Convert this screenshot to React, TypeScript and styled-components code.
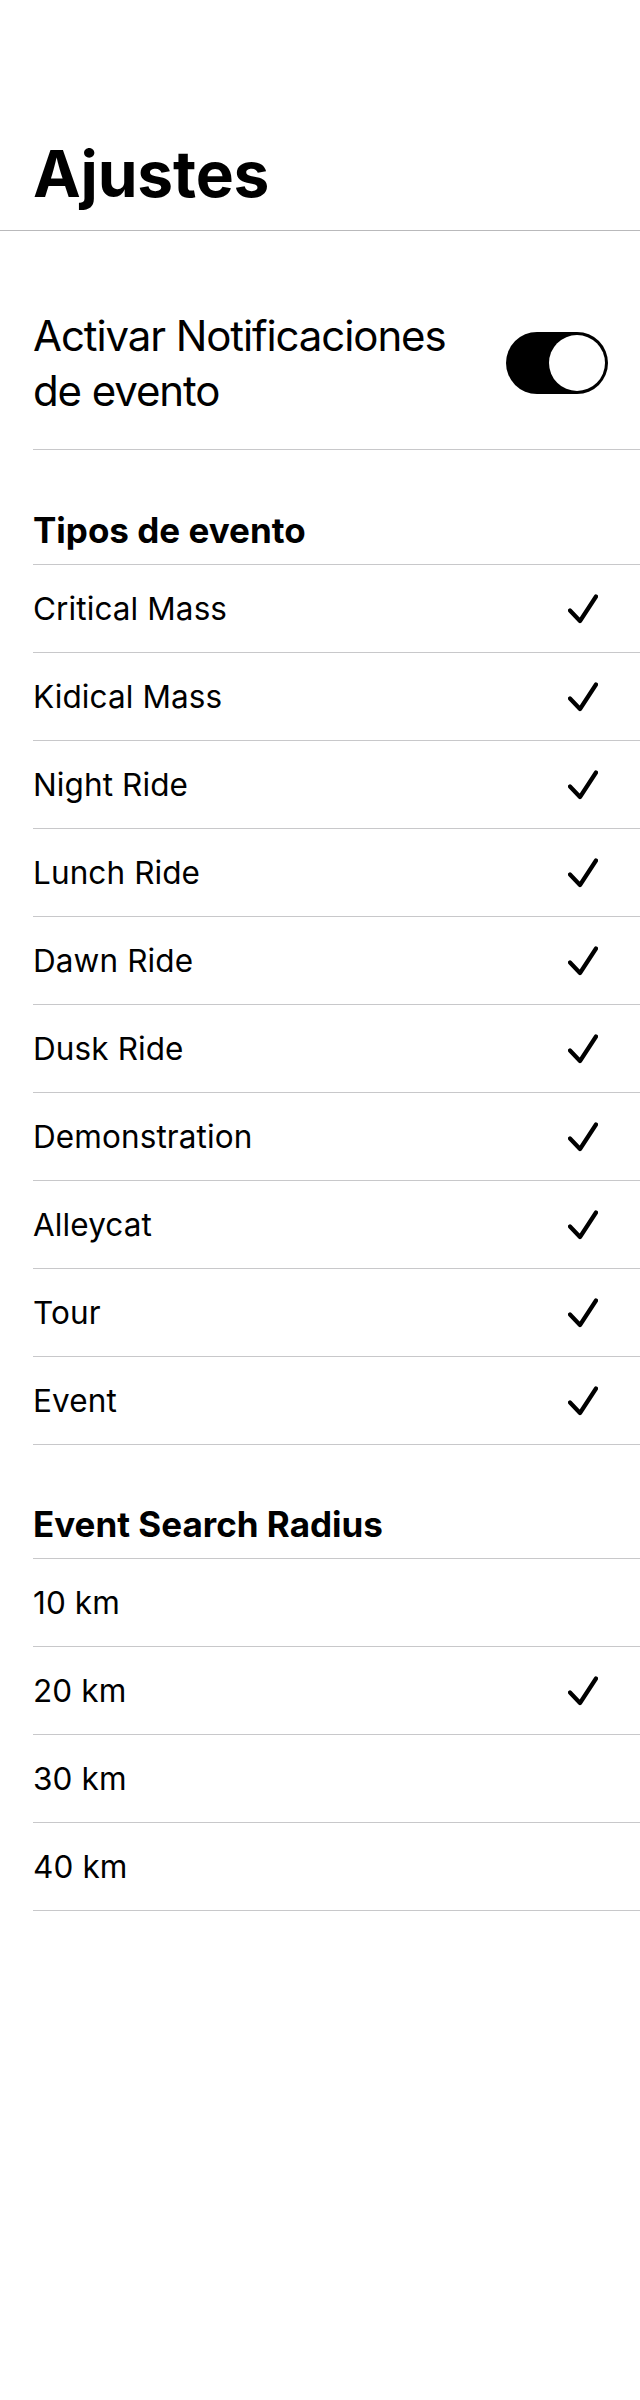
import styled, { createGlobalStyle } from 'styled-components'

const GlobalStyle = createGlobalStyle`
    body {
        margin: 0;
        background: #ffffff;
        font-family: Inter, "Noto Sans", "Liberation Sans", sans-serif;
        color: #000000;
    }
`

const Page = styled.div`
    width: 640px;
    min-height: 2400px;
    background: #ffffff;
`

const TitleBar = styled.header`
    height: 231px;
    box-sizing: border-box;
    display: flex;
    align-items: flex-end;
    padding: 0 33px 24px;
    border-bottom: 1px solid #b9b9bb;
`

const Title = styled.h1`
    margin: 0;
    font-size: 64px;
    font-weight: 700;
    line-height: 1;
    letter-spacing: -0.2px;
`

const Content = styled.main`
    padding: 46px 0 0 33px;
`

const ToggleRow = styled.div`
    display: flex;
    align-items: center;
    justify-content: space-between;
    padding: 31px 32px 31px 0;
    border-bottom: 1px solid #c8c8ca;
`

const ToggleLabel = styled.div`
    font-size: 42px;
    line-height: 55px;
    max-width: 440px;
    letter-spacing: -1.1px;
`

const Switch = styled.div<{ $on: boolean }>`
    width: 102px;
    height: 62px;
    flex-shrink: 0;
    box-sizing: border-box;
    border-radius: 31px;
    background: ${p => (p.$on ? '#000000' : '#e5e5ea')};
    padding: 3px;
    display: flex;
    justify-content: ${p => (p.$on ? 'flex-end' : 'flex-start')};
`

const Knob = styled.div`
    width: 56px;
    height: 56px;
    border-radius: 50%;
    background: #ffffff;
`

const SectionHeader = styled.div<{ $height: number }>`
    height: ${p => p.$height}px;
    box-sizing: border-box;
    display: flex;
    align-items: flex-end;
    padding-bottom: 16px;
    border-bottom: 1px solid #c8c8ca;
    font-size: 35px;
    font-weight: 700;
    line-height: 1;
    letter-spacing: 0;
`

const Row = styled.div`
    height: 88px;
    box-sizing: border-box;
    display: flex;
    align-items: center;
    justify-content: space-between;
    padding-right: 42px;
    border-bottom: 1px solid #c8c8ca;
    font-size: 31.5px;
    letter-spacing: 0.1px;
`

const Check = () => (
    <svg width="30" height="30" viewBox="0 0 30 30" fill="none">
        <path d="M2 16.5 L12 27 L28 2.5" stroke="#000" strokeWidth="4.2" strokeLinecap="round" strokeLinejoin="round" />
    </svg>
)

const eventTypes = [
    'Critical Mass',
    'Kidical Mass',
    'Night Ride',
    'Lunch Ride',
    'Dawn Ride',
    'Dusk Ride',
    'Demonstration',
    'Alleycat',
    'Tour',
    'Event',
]

const radii = [10, 20, 30, 40]
const selectedRadius = 20

const App = () => {
    return (
        <Page>
            <GlobalStyle />
            <TitleBar>
                <Title>Ajustes</Title>
            </TitleBar>
            <Content>
                <ToggleRow>
                    <ToggleLabel>Activar Notificaciones de evento</ToggleLabel>
                    <Switch $on={true}>
                        <Knob />
                    </Switch>
                </ToggleRow>
                <SectionHeader $height={115}>Tipos de evento</SectionHeader>
                {eventTypes.map(t => (
                    <Row key={t}>
                        <span>{t}</span>
                        <Check />
                    </Row>
                ))}
                <SectionHeader $height={114}>Event Search Radius</SectionHeader>
                {radii.map(r => (
                    <Row key={r}>
                        <span>{r} km</span>
                        {r === selectedRadius && <Check />}
                    </Row>
                ))}
            </Content>
        </Page>
    )
}

export default App
